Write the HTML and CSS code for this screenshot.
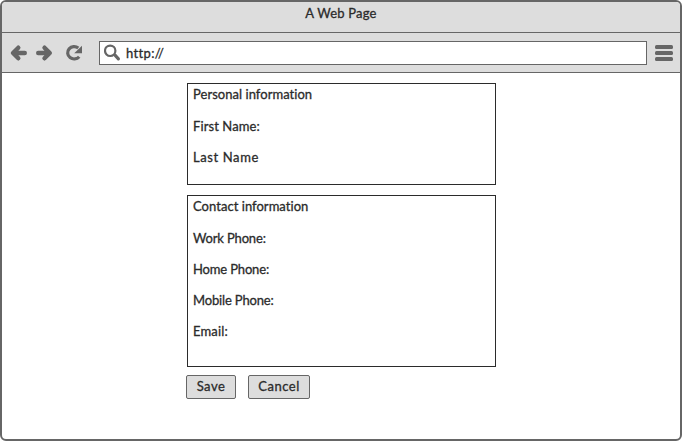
FILE: index.html
```html
<!DOCTYPE html>
<html lang="en">
<head>
<meta charset="utf-8">
<title>A Web Page</title>
<link rel="stylesheet" href="styles.css">
</head>
<body>
<div class="window">
  <header class="titlebar"><span class="t-title">A Web Page</span></header>
  <nav class="toolbar">
    <svg class="nav-icons" width="88" height="24" viewBox="0 0 88 24" fill="none" stroke="#666" stroke-width="4.400" stroke-linecap="round" stroke-linejoin="round">
      <path d="M16.300 6.700 11 12l5.300 5.300M11.500 12H22.800"/>
      <path d="M42.500 6.700 47.800 12l-5.300 5.300M47.500 12H36.200"/>
      <path d="M76.300 7A6.500 6.200 0 1 0 77.200 15.700" stroke-width="3.200" stroke-linecap="butt"/>
      <path d="M80 4.800V12.300h-7.800z" fill="#666" stroke="none"/>
    </svg>
    <div class="address">
      <svg width="18" height="18" viewBox="0 0 18 18" fill="none" stroke="#666" stroke-linecap="round">
        <circle cx="6.200" cy="6.800" r="5.200" stroke-width="2.200"/>
        <path d="M11 11.200 14.400 14.800" stroke-width="3.200"/>
      </svg>
      <span class="t-url">http://</span>
    </div>
    <svg class="menu" width="18" height="16" viewBox="0 0 18 16" fill="#666">
      <rect width="18" height="4" rx="1.500"/>
      <rect y="6" width="18" height="4" rx="1.500"/>
      <rect y="12" width="18" height="4" rx="1.500"/>
    </svg>
  </nav>
  <main class="page">
    <section class="panel personal">
      <h2>Personal information</h2>
      <p class="t-first">First Name:</p>
      <p class="t-last">Last Name</p>
    </section>
    <section class="panel contact">
      <h2>Contact information</h2>
      <p>Work Phone:</p>
      <p>Home Phone:</p>
      <p>Mobile Phone:</p>
      <p class="t-email">Email:</p>
    </section>
    <div class="actions">
      <button class="save">Save</button>
      <button class="cancel">Cancel</button>
    </div>
  </main>
</div>
</body>
</html>
```
FILE: styles.css
```css
* { box-sizing: border-box; }
body {
  margin: 0;
  background: #fff;
  color: #2b2b2b;
  font: 400 13px/16px Lato, sans-serif;
  -webkit-text-stroke: 0.3px #2b2b2b;
}
.window {
  display: flex;
  flex-direction: column;
  width: 682px;
  height: 441px;
  border: 2px solid #666;
  border-radius: 6px;
  overflow: hidden;
}
.titlebar {
  height: 31px;
  padding-top: 3px;
  background: #ddd;
  border-bottom: 1px solid #666;
  text-align: center;
}
.t-title { letter-spacing: 0.2px; }
.t-url { letter-spacing: 0.35px; }
.toolbar {
  display: flex;
  align-items: center;
  height: 40px;
  padding: 0 7px 0 0;
  background: #ddd;
  border-bottom: 1px solid #666;
}
.nav-icons { margin-right: 9px; }
.address {
  display: flex;
  align-items: center;
  gap: 4px;
  width: 548px;
  height: 24px;
  margin-top: 1px;
  padding-left: 4px;
  background: #fff;
  border: 1px solid #666;
}
.menu { margin-left: auto; margin-top: 1px; }
.page { width: 310px; margin: 10px 0 0 184px; }
.panel {
  width: 309px;
  margin: 0 0 10px 1px;
  padding: 2px 5px;
  border: 1px solid #2b2b2b;
}
.personal { height: 102px; }
.contact { height: 172px; margin-bottom: 8px; }
h2 { margin: 0 0 16px; font: inherit; letter-spacing: 0.04px; }
p { margin: 0 0 15px; letter-spacing: -0.16px; }
.t-first { letter-spacing: 0.1px; }
.t-last { letter-spacing: 0.6px; }
.t-email { letter-spacing: 0.15px; }
.actions { display: flex; gap: 12px; }
button {
  height: 24px;
  padding: 0 0 2px;
  font: inherit;
  color: inherit;
  letter-spacing: 0.5px;
  background: #ddd;
  border: 1px solid #666;
  border-radius: 2px;
}
.save { width: 50px; }
.cancel { width: 62px; }
```
